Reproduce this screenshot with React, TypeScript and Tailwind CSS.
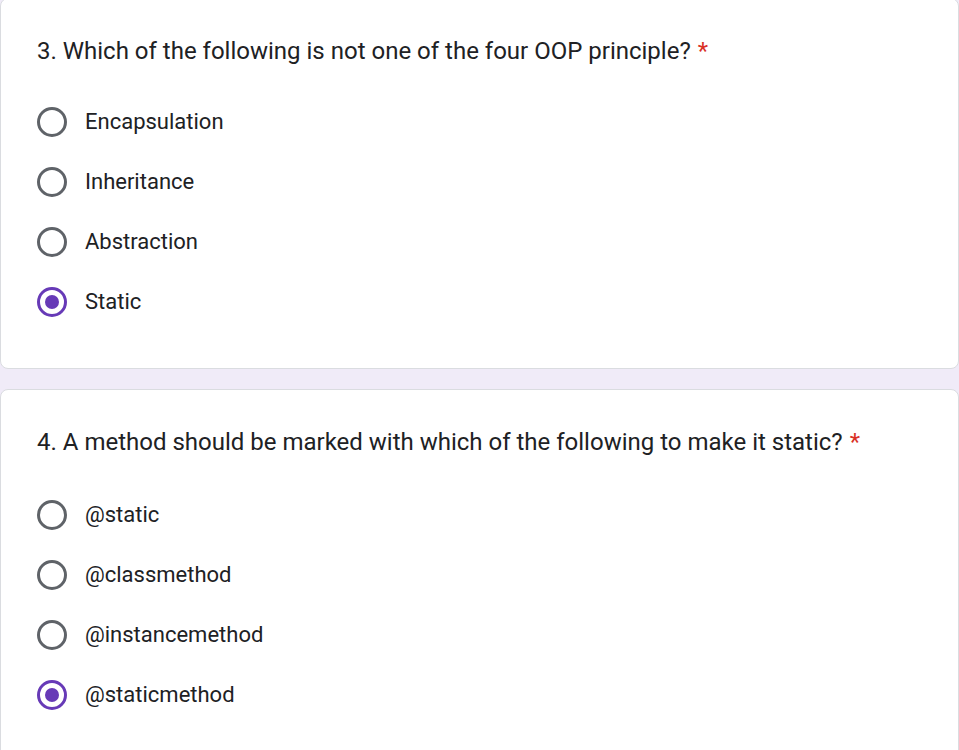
const questions = [
  {
    title: "3. Which of the following is not one of the four OOP principle?",
    options: ["Encapsulation", "Inheritance", "Abstraction", "Static"],
    selected: 3,
  },
  {
    title: "4. A method should be marked with which of the following to make it static?",
    options: ["@static", "@classmethod", "@instancemethod", "@staticmethod"],
    selected: 3,
  },
];

const Radio = ({ checked }: { checked: boolean }) => (
  <div
    className={`w-[30px] h-[30px] rounded-full border-[3px] flex items-center justify-center shrink-0 ${
      checked ? "border-[#673ab7]" : "border-[#5f6368]"
    }`}
  >
    {checked && <div className="w-[14px] h-[14px] rounded-full bg-[#673ab7]" />}
  </div>
);

const App = () => {
  return (
    <div
      className="min-h-screen bg-[#f0ebf8] flex flex-col gap-[20px] overflow-hidden"
      style={{ fontFamily: "Roboto, 'Liberation Sans', sans-serif" }}
    >
      {questions.map((q, qi) => (
        <div
          key={qi}
          className={`bg-white rounded-[8px] border border-[#dadce0] pl-[36px] pt-[38px] pb-[36px] ${
            qi === 0 ? "-mt-[2px]" : ""
          }`}
        >
          {/* Question title */}
          <div className="text-[24px] leading-[28px] text-[#202124]">
            {q.title}
            <span className="text-[#d93025] ml-[7px]">*</span>
          </div>

          {/* Options */}
          <div className={`flex flex-col ${qi === 0 ? "mt-[27px]" : "mt-[29px]"}`}>
            {q.options.map((opt, oi) => (
              <div key={opt} className="h-[60px] flex items-center gap-[18px]">
                <Radio checked={oi === q.selected} />
                <span className="text-[22px] leading-[28px] text-[#202124]">{opt}</span>
              </div>
            ))}
          </div>
        </div>
      ))}
    </div>
  );
};

export default App;
